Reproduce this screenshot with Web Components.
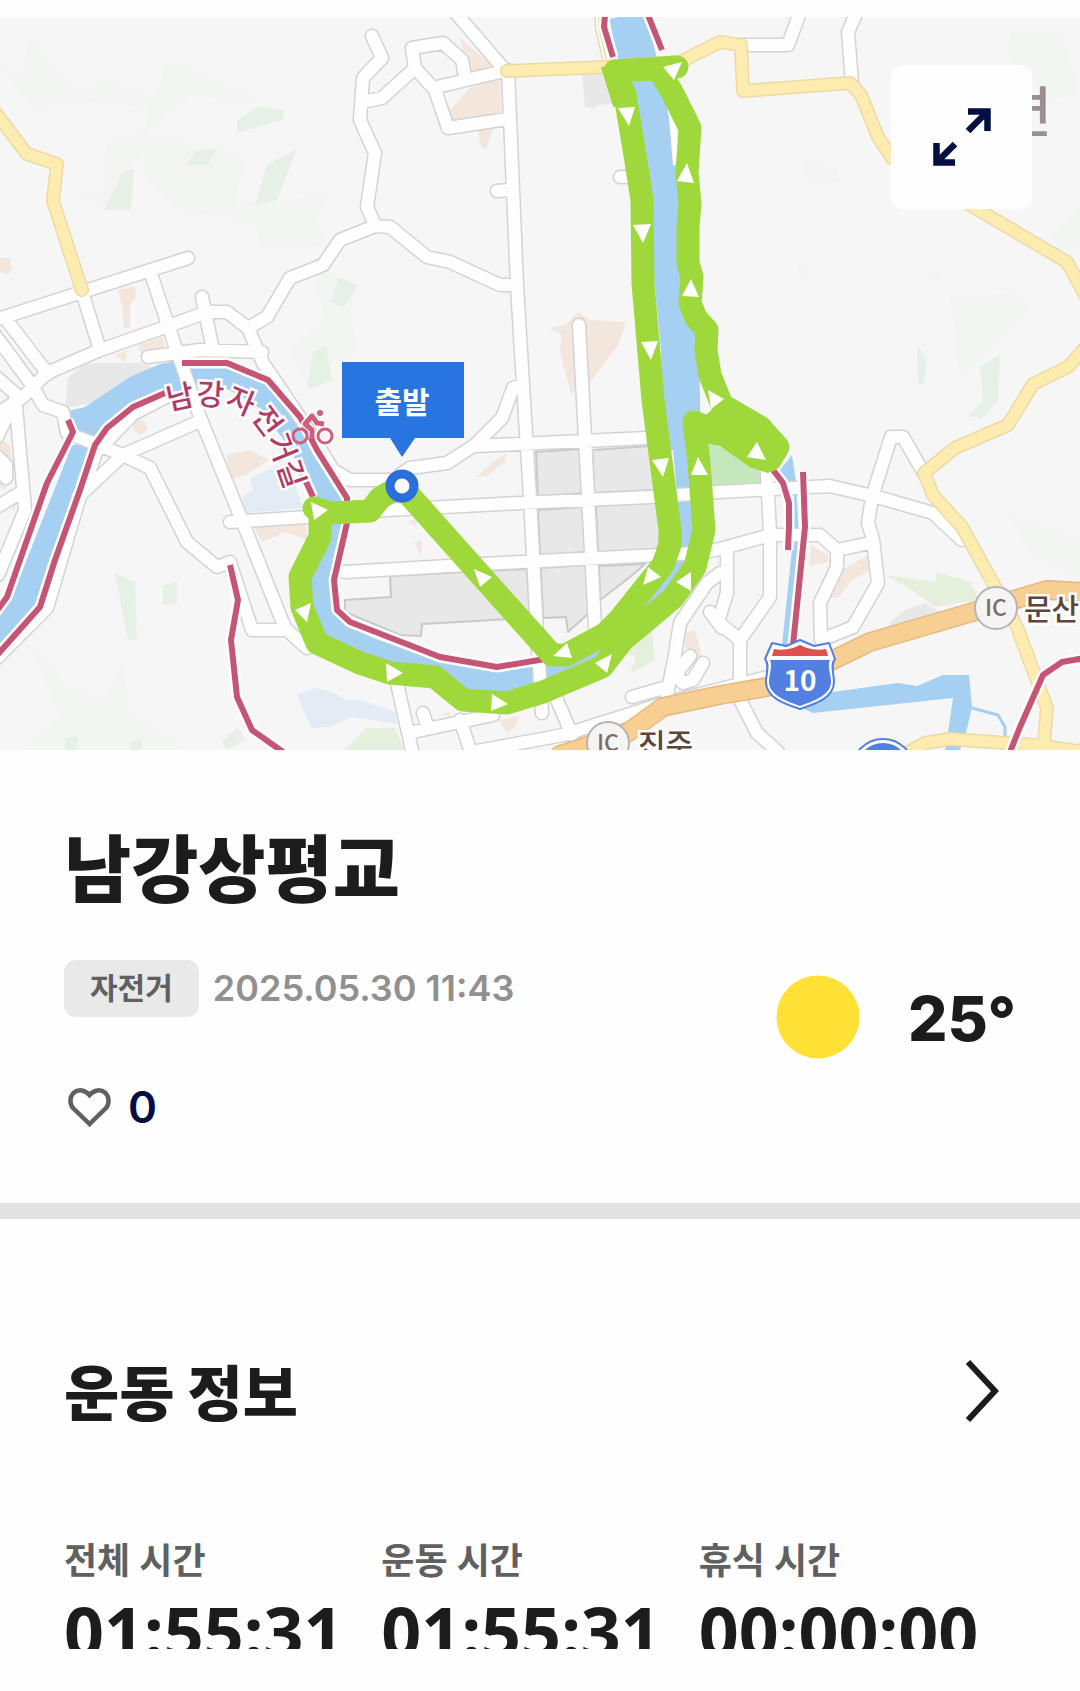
<!DOCTYPE html>
<html lang="ko">
<head>
<meta charset="utf-8">
<meta name="viewport" content="width=device-width, initial-scale=1">
<title>남강상평교</title>
<style>
  :root {
    --ink: #1c1c1c;
    --navy: #020f42;
    --muted: #606060;
    --line: #e2e2e2;
  }
  body {
    margin: 0;
    background: #fefefe;
    color: var(--ink);
    font-family: Inter, "Noto Sans CJK KR", sans-serif;
  }
</style>
</head>
<body>
<ride-page>
  <ride-map slot="map"></ride-map>
  <ride-summary place="남강상평교" kind="자전거" date="2025.05.30 11:43" likes="0" temp="25°"></ride-summary>
  <info-section heading="운동 정보">
    <stat-item label="전체 시간">01:55:31</stat-item>
    <stat-item label="운동 시간">01:55:31</stat-item>
    <stat-item label="휴식 시간">00:00:00</stat-item>
  </info-section>
</ride-page>

<script>
class RidePage extends HTMLElement {
  connectedCallback() {
    this.attachShadow({ mode: 'open' });
    this.shadowRoot.innerHTML = `
      <style>
        :host { display: block; padding: 17px 0 42px; }
        main { display: flex; flex-direction: column; }
      </style>
      <main>
        <slot name="map"></slot>
        <slot></slot>
      </main>
    `;
  }
}

class RideMap extends HTMLElement {
  connectedCallback() {
    // each road is drawn twice: casing first, then the fill
    const roads = `
      M-5 320L188 258M5 318L48 374M83 295L100 350M152 277L172 337L200 417L243 523L285 628
      M-5 415L23 397L47 373L100 350L163 328L207 312L227 312L248 328L267 317L290 278L323 265L340 240L375 226L390 227L427 257L450 262L500 285L517 285
      M248 328L263 363L280 388L313 437L333 470L350 480L400 480
      M202 297L213 350M148 357L200 350L262 352M-5 335L32 385L43 405L63 412L67 433L93 443L123 455L150 468L187 542L217 567L230 562L240 593L252 630L287 630L307 648
      M-5 376L18 396M15 395L25 510L-2 575M-3 437L15 400M-5 508L20 493M-2 457L6 465L6 478
      M200 421L123 455L78 497M168 396L133 414L108 440M97 450L78 503L47 608L-5 660
      M230 522L307 517L387 510L520 503L650 497L720 492L830 486L877 497L933 513L962 540
      M455 12L503 68M508 70L517 285L523 385L530 497L537 633L542 713
      M372 36L382 58L363 78L360 120L375 153L367 207L375 225
      M362 102L382 98L415 68L412 48L443 43L462 60L465 77M415 68L435 90L448 128L507 119M437 87L500 72
      M497 191L512 190M620 177L630 177M579 325L583 400L595 627
      M522 385L513 388L502 418L475 445L447 463L410 468L400 475M475 446L647 438
      M345 572L520 562L700 553L720 549L770 535L820 535L837 550L870 543
      M767 473L770 533L770 597L740 640L740 700L757 733L778 752
      M837 550L837 567L820 603L821 640L853 627L878 583L873 540L868 523L872 497L891 437L903 437L925 475
      M727 553L727 593L718 622L740 640M720 573L707 583L680 623L674 660L667 695
      M632 697L667 687M690 656L676 674L683 683L693 680L703 663
      M397 683L413 755M423 713L428 728M413 732L493 715M460 720L472 755M472 752L563 735L665 703L768 677M557 700L572 735
      M710 612L722 628M741 45L788 45L801 10M852 83L848 32L860 5`;
    const yellow = `
      M-5 112L27 154L57 164L53 201L82 290
      M507 71L607 67L680 62L720 42L741 45L743 91L850 83L861 95L878 137L892 158L970 205L1067 262L1085 295
      M1085 348L1068 367L1033 384L1008 425L955 448L924 473L933 495L962 527L993 583L1017 627L1047 708L1043 755
      M905 754L925 743L950 739L1035 745L1085 752`;
    const highway = 'M560 755L627 733L663 707L720 695L767 687L833 660L870 642L973 612L1047 590L1085 592';
    const bike = `
      M68 420L73 432L47 483L7 597L-4 612M165 393L133 407L107 428L95 445L80 490L55 560L40 607L-3 655
      M182 363L227 363L268 380L300 417L317 450L347 498L347 523L334 580L337 610L350 622L440 657L497 667L545 659
      M302 473L313 497M230 565L238 600L231 640L237 697L252 730L283 752
      M605 15L604 27L613 57M648 15L662 50M773 470L783 483L789 503L789 527L788 550M803 472L805 527L793 645
      M1010 752L1020 727L1043 675L1062 662L1085 658`;

    this.attachShadow({ mode: 'open' });
    this.shadowRoot.innerHTML = `
      <style>
        :host { display: block; position: relative; }
        svg { display: block; }
        .map { width: 100%; height: auto; background: #f6f6f6; }
        .map path { stroke-linejoin: round; }
        text { font-family: "Noto Sans CJK KR", sans-serif; }
        button {
          position: absolute;
          top: 48px;
          right: 48px;
          display: grid;
          place-items: center;
          width: 141px;
          height: 144px;
          padding: 0;
          border: 0;
          border-radius: 12px;
          background: #fefefe;
          color: var(--navy);
        }
      </style>
      <svg class="map" viewBox="0 17 1080 733" role="img" aria-label="운동 경로 지도">
        <!-- hills -->
        <g fill="#f2f5f2">
          <path d="M28 37L78 97L107 80L155 100L165 65L190 68L262 102L190 96L145 135L220 150L245 158L235 205L330 195L315 220L330 245L260 250L255 222L180 210L145 175L145 145L110 205L75 198L105 190L105 145L145 130L148 108L75 100L35 110L0 65L22 75Z"/>
          <path d="M1010 30L1062 37L1080 95L1045 100L1008 52ZM1080 205L1045 240L1080 250ZM950 297L1015 293L1030 310L995 345L960 375L955 335Z"/>
          <path d="M30 645L70 690L105 700L125 660L128 710L185 750L20 750L60 715ZM1010 515L1080 540L1080 580L1030 555ZM310 270L350 280L355 350L305 380L290 350L325 320Z"/>
          <path d="M803 163L838 168L840 182L805 178ZM797 260L810 267L800 278ZM925 275L939 267L938 284Z"/>
        </g>
        <g fill="#e7f0e7">
          <path d="M237 120L260 106L284 110L283 120L237 133ZM186 165L196 151L217 149L208 165ZM104 210L123 172L134 169L131 210ZM255 206L267 165L297 149L277 200Z"/>
          <path d="M330 302L340 277L358 286L344 307ZM307 390L313 352L326 346L332 380ZM115 573L135 582L137 640L128 640ZM163 585L177 582L177 603L163 605Z"/>
          <path d="M917 345L927 358L924 384L918 384ZM980 367L1000 354L998 400L982 419L968 416L983 400ZM65 738L78 736L76 750L65 750ZM131 742L142 738L141 750L131 750ZM222 741L238 727L245 740L226 750Z"/>
          <path d="M885 575L935 582L937 572L970 582L980 600L935 607L912 590ZM652 630L655 660L630 674L636 655L620 655Z" fill="#e4f0dc"/>
          <path d="M345 750L366 728L394 728L405 750ZM1077 750L1080 740V750Z" fill="#e4f0dc"/>
          <path d="M707 440L765 470L763 487L706 493Z" fill="#c6e6bd"/>
        </g>
        <!-- built-up areas -->
        <g fill="#f3e7dd">
          <path d="M460 38L495 68L468 72ZM448 112L470 88L500 78L502 118L452 122ZM478 130L493 128L486 150L480 146ZM549 328L565 325L578 312L590 320L626 322L618 345L588 385L571 394L560 352L562 335Z"/>
          <path d="M0 258L10 258L12 268L8 275L0 272ZM118 290L135 286L136 297L130 305L130 328L124 328L122 305ZM114 355L128 350L125 362ZM138 345L163 337L165 348L140 353Z"/>
          <path d="M227 455L250 450L262 457L270 460L245 475L228 480ZM253 525L305 522L308 540L285 532L262 542ZM140 420A7 7 0 1 0 140 434A7 7 0 1 0 140 420ZM0 440L10 445L14 475L5 490L0 488ZM10 503L17 500L14 512Z"/>
          <path d="M477 477L492 462L506 453L505 462L487 476ZM408 522L418 518L416 527ZM414 542L422 540L421 556ZM811 545L828 555L828 562L809 566ZM830 598L845 568L868 555L871 570L852 580L838 598ZM680 635L695 630L703 660L688 650ZM498 720L520 716L515 727L507 733ZM568 383L578 380L576 394ZM440 715L450 711L450 717Z"/>
        </g>
        <g fill="#e3ebf4">
          <path d="M250 478L277 466L290 470L303 508L246 513L242 497L253 490Z"/>
          <path d="M297 695L315 688L335 693L345 700L360 700L395 712L397 724L352 717L330 727L312 728L303 710Z"/>
        </g>
        <g fill="#e8e8e8" stroke="#c9c9c9" stroke-width="2">
          <path d="M536 452L581 449L583 493L538 497ZM592 450L650 446L655 490L594 493ZM538 510L584 507L586 552L540 555ZM596 506L662 502L665 520L657 550L598 553ZM541 568L588 565L590 612L568 632L566 617L543 618ZM599 566L645 564L630 577L600 600ZM390 576L527 569L530 618L422 624L421 636L400 635L345 612L345 600L391 597Z"/>
        </g>
        <path d="M582 75L602 75L615 104L597 105L595 109L585 107ZM68 378L85 363L140 363L155 368L100 402L65 408ZM890 622L905 610L925 603L940 612L890 630Z" fill="#e8e8e8"/>

        <!-- water -->
        <g fill="#a5d0f2">
          <path d="M0 612L12 597L72 445L92 445L60 545L38 610L0 655ZM68 411L85 407L130 377L160 364L183 360L183 392L165 390L130 407L97 440L75 432Z"/>
          <path d="M833 692L897 683L917 686L943 675L969 675L972 707L965 737L960 750L945 750L948 733L953 698L813 713L798 706Z"/>
          <path d="M780 470L792 455L796 482L799 540L790 645L782 645L793 540L794 490Z"/>
        </g>
        <g fill="none" stroke="#a5d0f2">
          <path d="M170 375L225 374L262 393L292 430L320 475L336 510L325 560L322 600L335 634L370 650L440 675L500 682L550 672L600 640L655 590L684 555L690 500L684 430" stroke-width="25"/>
          <path d="M682 450L680 350L666 200L644 90L628 15" stroke-width="38"/>
          <path d="M972 708L998 715L1005 727L1005 737" stroke-width="3"/>
        </g>
        <path d="M671 105L676 165" stroke="#fefefe" stroke-width="6" fill="none"/>

        <!-- roads -->
        <g fill="none" stroke-linecap="round">
          <path d="${roads}" stroke="#d3d3d3" stroke-width="15"/>
          <path d="${roads}" stroke="#fefefe" stroke-width="12"/>
          <path d="M597 15L597 27L606 66" stroke="#ecd9a5" stroke-width="5"/>
          <path d="M597 15L597 27L606 66" stroke="#fefefe" stroke-width="2"/>
          <path d="${yellow}" stroke="#ecd9a5" stroke-width="14"/>
          <path d="${yellow}" stroke="#fcecb0" stroke-width="11"/>
          <path d="${highway}" stroke="#e3b87d" stroke-width="20"/>
          <path d="${highway}" stroke="#f7cf93" stroke-width="17"/>
        </g>
        <g fill="none">
          <path d="${bike}" stroke="#fefefe" stroke-width="11"/>
          <path d="${bike}" stroke="#c65475" stroke-width="6"/>
        </g>

        <!-- name of the cycle path -->
        <path id="namgang" d="M169 411C202 400 236 404 256 424C269 440 274 456 285 488" fill="none"/>
        <text font-size="30" font-weight="500" fill="#b03c66" stroke="#fefefe" stroke-width="5" paint-order="stroke"><textPath href="#namgang">남강자전거길</textPath></text>
        <g fill="none" stroke="#fefefe" stroke-width="7">
          <circle cx="325" cy="436" r="7"/>
          <path d="M312 438L311 429L304 424L311 416L318 423L325 424"/>
        </g>
        <g fill="none" stroke="#cf5f7e" stroke-width="3">
          <circle cx="300" cy="436" r="7"/><circle cx="325" cy="436" r="7"/>
          <path d="M312 439L312 430L305 424L312 416L317 423L324 424" stroke-width="5"/>
          <circle cx="320" cy="413" r="3" fill="#cf5f7e" stroke="none"/>
        </g>

        <!-- recorded route -->
        <path d="M402 487L552 655L566 655L605 634L619 620L663 565L670 545L670 530L653 400L643 283L642 200L635 155L625 95L615 71L677 67M660 72L672 92L690 128L687 173L690 203L688 227L688 263L692 277L690 303L696 318L707 330L706 350L710 375L722 405L760 427L778 447L770 460L730 435L694 422L699 463L704 530L695 567L673 598L647 620L623 640L602 667L543 692L507 703L463 700L435 677L390 673L360 663L317 643L302 607L300 577L320 537L320 513L314 508L330 513L370 511L380 498L402 485" fill="none" stroke="#9fd83b" stroke-width="23" stroke-linecap="round"/>
        <path d="M602 68L630 64L654 80L630 80L634 100L614 106ZM706 416L725 400L768 420L782 440L784 458L768 472L750 466L720 445L706 442Z" fill="#9fd83b" stroke="#9fd83b" stroke-width="2"/>
        <path d="M663 67L682 62L674 80ZM618 108L635 107L629 126ZM633 225L651 224L643 243ZM641 342L658 341L651 360ZM652 460L669 458L663 477ZM677 181L694 183L687 163ZM682 296L699 297L691 279ZM691 475L708 475L698 457ZM708 390L724 399L711 409ZM757 442L747 457L766 460ZM648 567L643 585L661 577ZM691 572L691 591L676 582ZM612 654L595 663L607 673ZM567 643L553 656L572 658ZM474 569L492 577L480 587ZM386 663L403 673L387 682ZM492 694L508 704L491 711ZM311 502L328 510L314 520ZM295 610L311 603L307 622Z" fill="#fefefe"/>

        <!-- start marker -->
        <path d="M342 362H464V438H415L402 457L390 438H342Z" fill="#2874e0"/>
        <text x="402" y="413" font-size="30" font-weight="600" fill="#fefefe" text-anchor="middle">출발</text>
        <circle cx="402" cy="486" r="12" fill="#fefefe" stroke="#2a6fdc" stroke-width="9"/>

        <!-- junctions and shields -->
        <g fill="#f4f4f4" stroke="#b9b3b1" stroke-width="2">
          <circle cx="996" cy="608" r="21"/><circle cx="608" cy="743" r="21"/>
        </g>
        <g font-size="23" font-weight="500" fill="#7b6c66" text-anchor="middle">
          <text x="996" y="616">IC</text><text x="608" y="751">IC</text>
        </g>
        <g font-size="30" font-weight="500" fill="#5c463b" stroke="#fefefe" stroke-width="5" paint-order="stroke">
          <text x="1024" y="620">문산</text><text x="638" y="755">진주</text>
        </g>
        <path d="M772 643L786 646L800 640L814 646L829 643L835 659C830 665 834 674 834 682C834 698 815 704 800 709C785 704 766 698 766 682C766 674 770 665 765 659Z" fill="#fefefe" stroke="#5180e2" stroke-width="2"/>
        <path d="M770 660H830C827 666 831 674 831 682C831 695 814 701 800 706C786 701 769 695 769 682C769 674 773 666 770 660Z" fill="#5180e2"/>
        <path d="M774 649C786 651 794 648 800 645C806 648 814 651 826 649L828 656H772Z" fill="#e24f4f"/>
        <text x="800" y="691" font-size="28" font-weight="600" fill="#fefefe" text-anchor="middle">10</text>
        <circle cx="883" cy="770" r="31" fill="#fefefe" stroke="#5180e2" stroke-width="2"/>
        <circle cx="883" cy="770" r="27" fill="#5180e2"/>
        <text x="1052" y="132" font-size="55" font-weight="500" fill="#9a9091" text-anchor="end">면</text>
      </svg>
      <button type="button" aria-label="지도 확대">
        <svg width="60" height="60" viewBox="0 0 60 60" fill="none" stroke="currentColor" stroke-width="6.500">
          <path d="M36 4.500H55.500V24M55 5L36 24M23 55.500H4.500V36M5 55L23 37"/>
        </svg>
      </button>
    `;
  }
}

class RideSummary extends HTMLElement {
  connectedCallback() {
    const get = (name) => this.getAttribute(name);
    this.attachShadow({ mode: 'open' });
    this.shadowRoot.innerHTML = `
      <style>
        :host {
          display: block;
          padding: 72px 64px 68px;
          border-bottom: 16px solid var(--line);
        }
        h1 { margin: 0; font-size: 73px; line-height: 96px; font-weight: 800; }
        .row { display: flex; justify-content: space-between; align-items: flex-start; }
        .meta { display: flex; align-items: center; gap: 14px; margin-top: 42px; }
        .kind {
          padding: 0 26px;
          border-radius: 12px;
          background: #e9e9e9;
          color: var(--muted);
          font-size: 30px;
          line-height: 57px;
          font-weight: 600;
        }
        time { color: #909090; font-size: 36px; line-height: 57px; font-weight: 600; }
        .like {
          display: flex;
          align-items: center;
          gap: 14px;
          margin-top: 62px;
          padding: 0;
          border: 0;
          background: none;
          color: var(--navy);
          font: 600 44px/56px Inter, sans-serif;
        }
        .weather { display: flex; gap: 48px; margin-top: 57px; font-size: 62px; line-height: 88px; font-weight: 800; }
        svg { display: block; }
      </style>
      <h1>${get('place')}</h1>
      <div class="row">
        <div>
          <div class="meta"><span class="kind">${get('kind')}</span><time>${get('date')}</time></div>
          <button class="like" type="button" aria-label="좋아요 ${get('likes')}">
            <svg width="50" height="50" viewBox="0 0 50 50" fill="none" stroke="#606060" stroke-width="4.500">
              <path d="M25.500 42L9 26C5.500 22 5.500 15 9.500 11C14 7 21 7.500 25.500 13C30 7.500 37 7 41.500 11C45.500 15 45.500 22 42 26Z"/>
            </svg>
            <span>${get('likes')}</span>
          </button>
        </div>
        <div class="weather">
          <svg width="84" height="84" viewBox="0 0 84 84" role="img" aria-label="맑음"><circle cx="42" cy="42" r="41.500" fill="#ffe135"/></svg>
          <span>${get('temp')}</span>
        </div>
      </div>
    `;
  }
}

class InfoSection extends HTMLElement {
  connectedCallback() {
    this.attachShadow({ mode: 'open' });
    this.shadowRoot.innerHTML = `
      <style>
        :host { display: block; padding: 135px 64px 0; }
        header { display: flex; justify-content: space-between; align-items: flex-start; }
        h2 { margin: 0; font-size: 60px; line-height: 80px; font-weight: 800; }
        a { display: block; padding: 5px 17px; color: var(--ink); }
        svg { display: block; }
        .stats { display: grid; grid-template-columns: repeat(3, 1fr); margin-top: 103px; }
      </style>
      <header>
        <h2>${this.getAttribute('heading')}</h2>
        <a href="#" aria-label="${this.getAttribute('heading')} 더보기">
          <svg width="36" height="64" viewBox="0 0 36 64" fill="none" stroke="currentColor" stroke-width="6">
            <path d="M5 3L32 32L5 61"/>
          </svg>
        </a>
      </header>
      <div class="stats"><slot></slot></div>
    `;
  }
}

class StatItem extends HTMLElement {
  connectedCallback() {
    this.attachShadow({ mode: 'open' });
    this.shadowRoot.innerHTML = `
      <style>
        :host { display: block; }
        .label { color: var(--muted); font-size: 36px; line-height: 48px; font-weight: 600; }
        .value {
          height: 64px;
          overflow: hidden;
          font: 700 70px/92px "Noto Sans", sans-serif;
        }
      </style>
      <div class="label">${this.getAttribute('label')}</div>
      <div class="value"><slot></slot></div>
    `;
  }
}

customElements.define('ride-page', RidePage);
customElements.define('ride-map', RideMap);
customElements.define('ride-summary', RideSummary);
customElements.define('info-section', InfoSection);
customElements.define('stat-item', StatItem);
</script>
</body>
</html>
